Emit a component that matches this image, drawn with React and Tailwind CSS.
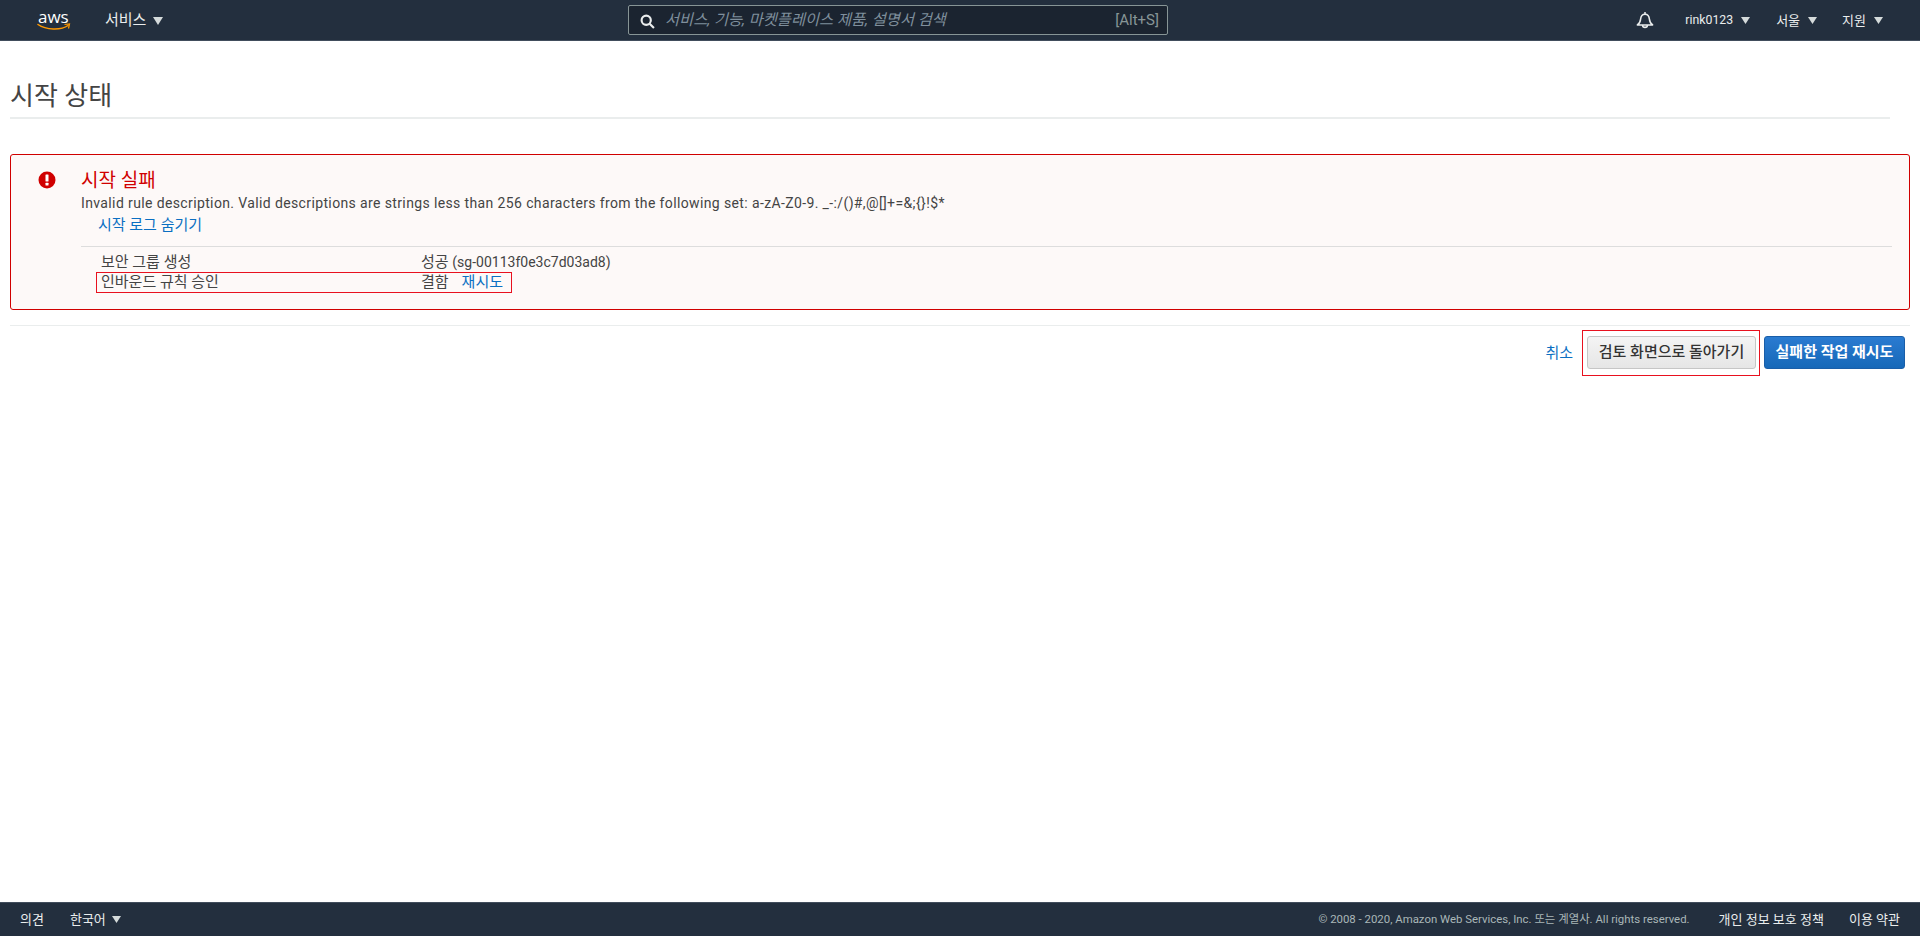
import React from 'react';

const kr = "font-['Roboto','Noto_Sans_CJK_KR',sans-serif]";

function Caret({ className = 'w-[10px] h-[8px]' }) {
  return (
    <svg viewBox="0 0 10 8" preserveAspectRatio="none" className={className}>
      <path d="M0 0H10L5 8Z" fill="#d5dbdb" />
    </svg>
  );
}

function Bell() {
  return (
    <svg viewBox="0 0 20 20" className="w-[18px] h-[18px]" fill="none" stroke="#eaeded" strokeWidth="1.7">
      <path d="M1.500 15.500c2.200-1.400 3.300-3 3.600-6.500C5.400 5.500 7.400 3.500 10 3.500s4.600 2 4.900 5.500c.3 3.500 1.400 5.100 3.600 6.500Z" strokeLinejoin="round" />
      <path d="M10 1V3.500" />
      <path d="M7.300 15.500a2.700 2.700 0 0 0 5.400 0" />
    </svg>
  );
}

function Header() {
  return (
    <header className="h-[41px] bg-[#232f3e] border-b border-[#414d5c] flex items-center text-[#eaeded] shrink-0">
      <div className="w-[105px] pl-[37px] flex flex-col items-start">
        <span className="font-['Open_Sans',sans-serif] text-[17px] leading-[14px] text-white pl-[1px]">aws</span>
        <svg viewBox="0 0 34 8" className="w-[34px] h-[8px] -mt-[1px]" fill="none">
          <path d="M1 1.500C9 7 24 7.500 31 2.500" stroke="#ff9900" strokeWidth="1.500" strokeLinecap="round" />
          <path d="M27.500 1.500L32.500 1 31.500 5.500" stroke="#ff9900" strokeWidth="1.200" />
        </svg>
      </div>
      <div className="flex items-center gap-[7px] w-[523px] text-[15px] leading-none">
        <span>서비스</span>
        <Caret className="w-[10px] h-[8px] mt-[1px]" />
      </div>
      <div className="w-[540px] h-[30px] border border-[#879596] rounded-[2px] bg-[#1b2430] flex items-center pl-[11px] pr-[8px]">
        <svg viewBox="0 0 14 14" className="w-[15px] h-[15px] mt-[3px]" fill="none" stroke="#eaeded" strokeWidth="2">
          <circle cx="5.800" cy="5.800" r="4.300" />
          <path d="M9 9l4 4" />
        </svg>
        <span className="ml-[10px] text-[15.300px] italic text-[#7f8f9c]">서비스, 기능, 마켓플레이스 제품, 설명서 검색</span>
        <span className="ml-auto text-[15px] text-[#879596]">[Alt+S]</span>
      </div>
      <div className="ml-auto flex items-center text-[13px] pr-[37px] leading-none">
        <Bell />
        <span className="ml-[31px] text-[12.300px]">rink0123</span>
        <Caret className="w-[9px] h-[7px] ml-[8px]" />
        <span className="ml-[26px]">서울</span>
        <Caret className="w-[9px] h-[7px] ml-[8px]" />
        <span className="ml-[25px]">지원</span>
        <Caret className="w-[9px] h-[7px] ml-[8px]" />
      </div>
    </header>
  );
}

function Footer() {
  return (
    <footer className="h-[34px] bg-[#232f3e] border-t border-[#414d5c] flex items-center text-[13px] text-[#eaeded] px-[20px] shrink-0">
      <span>의견</span>
      <span className="ml-[26px]">한국어</span>
      <Caret className="w-[9px] h-[7px] ml-[6px]" />
      <span className="ml-auto text-[11.400px] text-[#aab7b8]">© 2008 - 2020, Amazon Web Services, Inc. 또는 계열사. All rights reserved.</span>
      <span className="ml-[29px]">개인 정보 보호 정책</span>
      <span className="ml-[25px]">이용 약관</span>
    </footer>
  );
}

function Alert() {
  return (
    <div className="mt-[35px] h-[156px] border border-[#d00000] rounded-[3px] bg-[#fdf9f8] flex text-[15px] text-[#444444]">
      <div className="w-[71px] pt-[16px] pl-[27px]">
        <svg viewBox="0 0 18 18" className="w-[18px] h-[18px]">
          <circle cx="9" cy="9" r="8.500" fill="#d00000" />
          <rect x="7.500" y="3.500" width="3" height="7" rx="0.500" fill="#fff" />
          <rect x="7.500" y="11.800" width="3" height="2.800" rx="0.500" fill="#fff" />
        </svg>
      </div>
      <div className="flex-1 pt-[15px] pr-[17px]">
        <div className="text-[19px] leading-[22px] text-[#d00000] -ml-[1px]">시작 실패</div>
        <div className="mt-[1px] leading-[20px] text-[14px] tracking-[0.375px] -ml-[1px]">Invalid rule description. Valid descriptions are strings less than 256 characters from the following set: a-zA-Z0-9. _-:/()#,@[]+=&amp;;{'{}'}!$*</div>
        <div className="pl-[16px] leading-[20px] mt-[2px] text-[#0b6fc2]">시작 로그 숨기기</div>
        <div className="mt-[11px] border-t border-[#dddddd] pt-[5px] -ml-[1px]">
          <div className="flex h-[20px] leading-[20px] pl-[20px]">
            <span className="w-[320px]">보안 그룹 생성</span>
            <span>성공 <span className="text-[14px]">(sg-00113f0e3c7d03ad8)</span></span>
          </div>
          <div className="flex h-[21px] w-[416px] ml-[15px] leading-[19px] pl-[4px] border border-[#e8111f]">
            <span className="w-[320px]">인바운드 규칙 승인</span>
            <span>결함</span>
            <span className="ml-[13px] text-[#0b6fc2]">재시도</span>
          </div>
        </div>
      </div>
    </div>
  );
}

function Actions() {
  return (
    <div className="mt-[15px] border-t border-[#eaeded] flex items-start justify-end pr-[5px] pt-[4px] text-[15px]">
      <span className="text-[#0b6fc2] mt-[12px] mr-[9px]">취소</span>
      <div className="border border-[#e8111f] pl-[4px] pr-[3px] pt-[5px] h-[46px]">
        <button className="h-[33px] w-[169px] border border-[#c6c6c6] rounded-[3px] bg-gradient-to-b from-[#f4f4f4] to-[#e6e6e6] font-medium text-[#333333] whitespace-nowrap">
          검토 화면으로 돌아가기
        </button>
      </div>
      <button className="ml-[4px] mt-[6px] h-[33px] w-[141px] rounded-[3px] border border-[#1a5ea8] bg-gradient-to-b from-[#2a7bd1] to-[#1668b8] font-bold text-white whitespace-nowrap">
        실패한 작업 재시도
      </button>
    </div>
  );
}

export default function App() {
  return (
    <div className={`h-[936px] flex flex-col bg-white ${kr}`}>
      <Header />
      <main className="flex-1 px-[10px]">
        <div className="mr-[20px] pt-[40px] pb-[6px] border-b-2 border-[#eaeded]">
          <h1 className="text-[26px] leading-[30px] font-normal text-[#444444]">시작 상태</h1>
        </div>
        <Alert />
        <Actions />
      </main>
      <Footer />
    </div>
  );
}
